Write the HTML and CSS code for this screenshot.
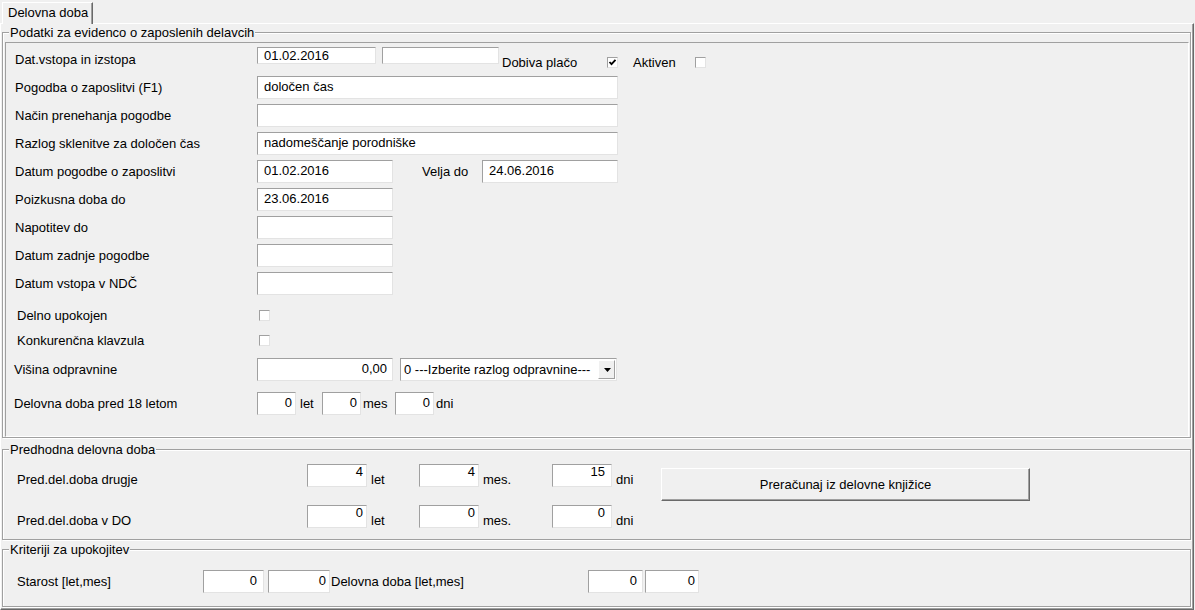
FILE: index.html
```html
<!DOCTYPE html>
<html lang="sl">
<head>
    <meta charset="UTF-8">
    <meta name="viewport" content="width=device-width, initial-scale=1.0">
    <title>Delovna doba</title>
    <link rel="stylesheet" href="styles.css">
</head>
<body>

    <!-- Tabs -->
    <div class="tabs">
        <div class="tab">Delovna doba</div>
    </div>

    <div class="page">

        <!-- Podatki za evidenco -->
        <fieldset class="group">
            <legend>Podatki za evidenco o zaposlenih delavcih</legend>
            <div class="panel">
                <div class="row row-first">
                    <span class="lbl">Dat.vstopa in izstopa</span>
                    <div class="edit short w-in">01.02.2016</div>
                    <div class="edit short w-out"></div>
                    <span class="text dobiva">Dobiva plačo</span>
                    <span class="check"><svg width="9" height="9" viewBox="0 0 9 9"><path d="M1.5 4 L3.5 6.2 L7.5 1.8" fill="none" stroke="#000" stroke-width="1.8"/></svg></span>
                    <span class="text aktiven">Aktiven</span>
                    <span class="check"></span>
                </div>
                <div class="row">
                    <span class="lbl">Pogodba o zaposlitvi (F1)</span>
                    <div class="edit w-long">določen čas</div>
                </div>
                <div class="row">
                    <span class="lbl">Način prenehanja pogodbe</span>
                    <div class="edit w-long"></div>
                </div>
                <div class="row">
                    <span class="lbl">Razlog sklenitve za določen čas</span>
                    <div class="edit w-long">nadomeščanje porodniške</div>
                </div>
                <div class="row">
                    <span class="lbl">Datum pogodbe o zaposlitvi</span>
                    <div class="edit w-date">01.02.2016</div>
                    <span class="text velja">Velja do</span>
                    <div class="edit w-date">24.06.2016</div>
                </div>
                <div class="row">
                    <span class="lbl">Poizkusna doba do</span>
                    <div class="edit w-date">23.06.2016</div>
                </div>
                <div class="row">
                    <span class="lbl">Napotitev do</span>
                    <div class="edit w-date"></div>
                </div>
                <div class="row">
                    <span class="lbl">Datum zadnje pogodbe</span>
                    <div class="edit w-date"></div>
                </div>
                <div class="row row-last">
                    <span class="lbl">Datum vstopa v NDČ</span>
                    <div class="edit w-date"></div>
                </div>
                <div class="row row-check">
                    <span class="lbl">Delno upokojen</span>
                    <span class="check"></span>
                </div>
                <div class="row row-check">
                    <span class="lbl">Konkurenčna klavzula</span>
                    <span class="check"></span>
                </div>
                <div class="row row-money">
                    <span class="lbl">Višina odpravnine</span>
                    <div class="edit num money w-date">0,00</div>
                    <div class="combo">
                        <span class="combo-text">0 ---Izberite razlog odpravnine---</span>
                        <span class="combo-btn"><svg width="7" height="4" viewBox="0 0 7 4"><polygon points="0,0 7,0 3.5,4" fill="#000"/></svg></span>
                    </div>
                </div>
                <div class="row row-young">
                    <span class="lbl">Delovna doba pred 18 letom</span>
                    <div class="edit num w-young">0</div>
                    <span class="unit u-let">let</span>
                    <div class="edit num w-young">0</div>
                    <span class="unit u-mes">mes</span>
                    <div class="edit num w-young">0</div>
                    <span class="unit u-dni">dni</span>
                </div>
            </div>
        </fieldset>

        <!-- Predhodna delovna doba -->
        <fieldset class="group group-prev">
            <legend>Predhodna delovna doba</legend>
            <div class="prev-body">
                <div class="prev-row prev-row-first">
                    <span class="lbl">Pred.del.doba drugje</span>
                    <div class="edit num top w-prev">4</div>
                    <span class="unit p-let">let</span>
                    <div class="edit num top w-prev">4</div>
                    <span class="unit p-mes">mes.</span>
                    <div class="edit num top wide-pad w-prev">15</div>
                    <span class="unit p-dni">dni</span>
                    <button class="button" type="button">Preračunaj iz delovne knjižice</button>
                </div>
                <div class="prev-row">
                    <span class="lbl">Pred.del.doba v DO</span>
                    <div class="edit num top w-prev">0</div>
                    <span class="unit p-let">let</span>
                    <div class="edit num top w-prev">0</div>
                    <span class="unit p-mes">mes.</span>
                    <div class="edit num top wide-pad w-prev">0</div>
                    <span class="unit p-dni">dni</span>
                </div>
            </div>
        </fieldset>

        <!-- Kriteriji za upokojitev -->
        <fieldset class="group group-crit">
            <legend>Kriteriji za upokojitev</legend>
            <div class="crit-body">
                <div class="crit-row">
                    <span class="lbl">Starost [let,mes]</span>
                    <div class="edit num wide-pad w-age1">0</div>
                    <div class="edit num w-age2">0</div>
                    <span class="text crit-text">Delovna doba [let,mes]</span>
                    <div class="edit num mid-pad w-dd1">0</div>
                    <div class="edit num w-dd2">0</div>
                </div>
            </div>
        </fieldset>

    </div>

</body>
</html>
```

FILE: styles.css
```css
/* General Reset */
* {
    margin: 0;
    padding: 0;
    box-sizing: border-box;
}

body {
    font-family: 'Liberation Sans', Arial, sans-serif;
    font-size: 13px;
    color: #000;
    background-color: #f0f0f0;
    width: 1195px;
    height: 610px;
    overflow: hidden;
}

/* Tabs */
.tabs {
    display: flex;
    align-items: flex-start;
    height: 23px;
    padding: 2px 0 0 2px;
}

.tab {
    position: relative;
    z-index: 1;
    width: 91px;
    height: 22px;
    padding-left: 5px;
    line-height: 19px;
    background-color: #f0f0f0;
    border-top: 1px solid #fff;
    border-left: 1px solid #fff;
    border-right: 1px solid #696969;
    box-shadow: inset -1px 0 #a0a0a0;
}

/* Tab page */
.page {
    width: 1194px;
    height: 587px;
    padding: 1px 2px 0 1px;
    border-top: 1px solid #fff;
    border-left: 1px solid #fff;
    border-right: 1px solid #696969;
    border-bottom: 1px solid #696969;
    box-shadow: inset -1px -1px #a0a0a0;
}

/* Group boxes */
.group {
    min-width: 0;
    border: 1px solid #a0a0a0;
    box-shadow: inset 1px 1px #fff, 1px 1px #fff;
}

.group legend {
    margin-left: 6px;
    padding: 0 1px;
    line-height: 15px;
    background-color: #f0f0f0;
}

.group-prev {
    margin-top: 4px;
}

.group-crit {
    margin-top: 2px;
}

.panel {
    height: 395px;
    margin: 2px 1px 0 2px;
    padding-top: 4px;
    border: 1px solid;
    border-color: #a0a0a0 #fff #fff #a0a0a0;
}

/* Rows */
.row {
    display: flex;
    align-items: center;
    height: 23px;
    padding-left: 9px;
    margin-bottom: 5px;
}

.lbl {
    flex-shrink: 0;
    width: 242px;
    line-height: 14px;
    white-space: nowrap;
}

.text,
.unit {
    flex-shrink: 0;
    line-height: 14px;
    white-space: nowrap;
}

.row-first {
    align-items: flex-start;
    margin-bottom: 6px;
}

.row-first .lbl {
    margin-top: 6px;
}

.row-first .text {
    margin-top: 9px;
}

.row-first .check {
    margin-top: 10px;
}

.row-last {
    margin-bottom: 8px;
}

.row-check {
    height: 25px;
    margin-bottom: 0;
    padding-left: 11px;
}

.row-money {
    margin-top: 5px;
    padding-left: 8px;
}

.row-young {
    margin-top: 11px;
    padding-left: 8px;
}

.row-money .lbl,
.row-young .lbl {
    width: 243px;
}

.dobiva {
    width: 105px;
    margin-left: 3px;
}

.aktiven {
    width: 62px;
    margin-left: 15px;
}

.velja {
    width: 60px;
    margin-left: 29px;
}

/* Edit boxes */
.edit {
    flex-shrink: 0;
    height: 23px;
    padding: 3px 5px 0 6px;
    line-height: 14px;
    white-space: nowrap;
    overflow: hidden;
    background-color: #fff;
    border: 1px solid;
    border-color: #a0a0a0 #e3e3e3 #e3e3e3 #a0a0a0;
}

.edit.short {
    height: 17px;
    padding-top: 1px;
}

.edit.top {
    padding-top: 0;
}

.edit.num {
    text-align: right;
    padding-left: 2px;
    padding-right: 3px;
}

.edit.money {
    padding-right: 5px;
}

.edit.wide-pad {
    padding-right: 6px;
}

.edit.mid-pad {
    padding-right: 5px;
}

.w-in { width: 119px; margin-right: 6px; }
.w-out { width: 117px; }
.w-long { width: 361px; }
.w-date { width: 136px; }
.w-young { width: 39px; }
.w-prev { width: 60px; }
.w-age1 { width: 61px; }
.w-age2 { width: 62px; margin-left: 4px; }
.w-dd1 { width: 55px; }
.w-dd2 { width: 54px; margin-left: 2px; }

.u-let { width: 22px; margin-left: 4px; }
.u-mes { width: 32px; margin-left: 2px; }
.u-dni { margin-left: 2px; }

/* Checkbox */
.check {
    flex-shrink: 0;
    display: flex;
    align-items: center;
    justify-content: center;
    width: 11px;
    height: 11px;
    background-color: #fff;
    border: 1px solid;
    border-color: #a0a0a0 #e3e3e3 #e3e3e3 #a0a0a0;
}

/* Combo box */
.combo {
    flex-shrink: 0;
    display: flex;
    width: 217px;
    height: 23px;
    margin-left: 7px;
    padding: 1px;
    background-color: #fff;
    border: 1px solid;
    border-color: #a0a0a0 #e3e3e3 #e3e3e3 #a0a0a0;
}

.combo-text {
    flex: 1;
    padding-left: 2px;
    line-height: 19px;
    white-space: nowrap;
    overflow: hidden;
}

.combo-btn {
    flex-shrink: 0;
    display: flex;
    align-items: center;
    justify-content: center;
    width: 17px;
    height: 19px;
    padding-left: 1px;
    background-color: #f0f0f0;
    border: 1px solid;
    border-color: #fff #a0a0a0 #a0a0a0 #fff;
}

/* Predhodna delovna doba */
.prev-body {
    padding: 7px 0 11px 14px;
}

.prev-row {
    display: flex;
    align-items: flex-start;
    height: 23px;
}

.prev-row-first {
    height: 41px;
}

.prev-row .lbl {
    width: 290px;
    padding-top: 9px;
}

.prev-row .unit {
    padding-top: 9px;
    margin-left: 4px;
}

.p-let { width: 48px; }
.p-mes { width: 69px; }
.p-dni { width: 24px; }

.button {
    flex-shrink: 0;
    width: 369px;
    height: 33px;
    margin: 4px 0 0 21px;
    font: inherit;
    color: #000;
    background-color: #f0f0f0;
    border: 1px solid;
    border-color: #fff #696969 #696969 #fff;
    box-shadow: inset -1px -1px #a0a0a0;
}

/* Kriteriji za upokojitev */
.crit-body {
    padding: 13px 0 13px 14px;
}

.crit-row {
    display: flex;
    align-items: center;
    height: 23px;
}

.crit-row .lbl {
    width: 186px;
}

.crit-text {
    width: 257px;
    margin-left: 1px;
}
```
